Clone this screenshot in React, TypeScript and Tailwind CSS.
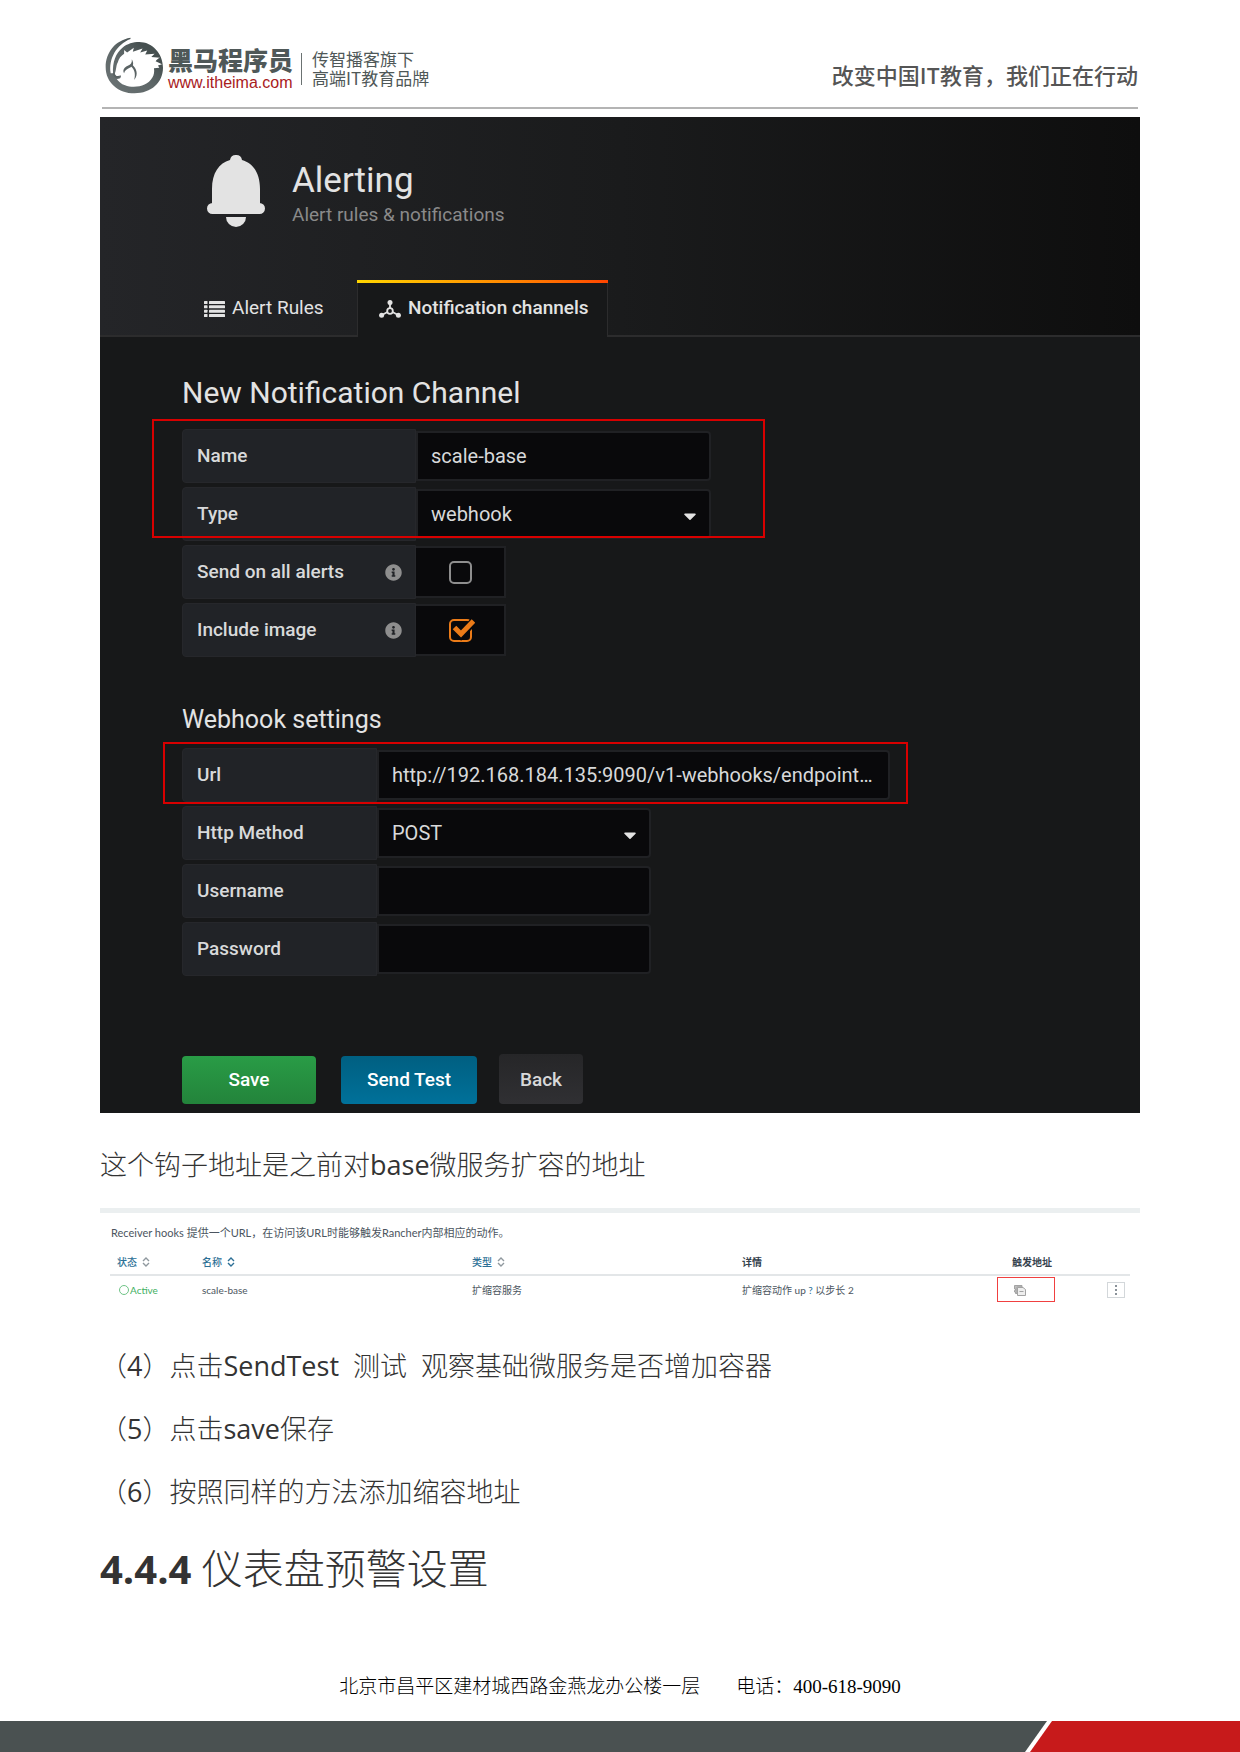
import React from "react";
import { FaInfoCircle, FaCaretDown } from "react-icons/fa";

const cjk = "font-['Open_Sans','Noto_Sans_CJK_SC',sans-serif]";

function HorseLogo() {
  return (
    <svg viewBox="20 16 176 170" className="h-[57px] w-[59px] shrink-0" aria-hidden="true">
      <defs>
        <linearGradient id="ring" x1="0" y1="1" x2="1" y2="0">
          <stop offset="0" stopColor="#6d7576" />
          <stop offset="0.5" stopColor="#5d6667" />
          <stop offset="0.75" stopColor="#465050" />
          <stop offset="1" stopColor="#465050" />
        </linearGradient>
      </defs>
      <path
        fill="url(#ring)"
        d="M96 18C50 26 22 62 22 106C22 152 60 184 108 184C158 184 193 152 193 108C193 64 160 31 122 31C104 31 86 36 72 48C52 64 42 92 44 124L37 124C30 82 54 38 96 22Z"
      />
      <path
        fill="#fff"
        d="M48 127C54 118 52 102 58 92C61 80 68 72 77 66L77 55L86 62L106 48L103 60L132 50L125 62L146 56L140 68L168 66L158 76L184 78C176 81 174 85 171 88L190 97L178 101L182 108L166 109C170 130 158 148 138 158C122 166 96 167 80 160C68 156 60 148 55 141C66 142 70 134 66 130C58 134 50 134 48 127Z"
      />
      <path d="M100 82C108 97 103 103 95 107C85 111 78 117 77 124C71 114 79 106 88 102C97 98 101 93 100 82Z" fill="#5a6364" />
      <path d="M101 98C112 108 122 126 107 144C112 126 108 113 98 104Z" fill="#5a6364" />
      <path d="M46 124C48 134 54 138 62 134" fill="none" stroke="#5a6364" strokeWidth="6" />
    </svg>
  );
}

function BellIcon() {
  return (
    <svg viewBox="0 0 58 72" className="h-[72px] w-[58px] shrink-0 text-[#e3e3e3]" fill="currentColor" aria-hidden="true">
      <path d="M29 0a6 6 0 0 0-6 5C12 8 5 18 5 34v14H5.500a5.500 5.500 0 0 0 0 11h47a5.500 5.500 0 0 0 0-11H53V34C53 18 46 8 35 5a6 6 0 0 0-6-5Z" />
      <path d="M19 62h20a10 10 0 0 1-20 0Z" />
    </svg>
  );
}

function ListIcon() {
  return (
    <svg viewBox="0 0 21 16" className="h-[16px] w-[21px]" fill="currentColor" aria-hidden="true">
      {[0, 4.333, 8.667, 13].map((y) => (
        <g key={y}>
          <rect x="0" y={y} width="3.500" height="3" rx="0.600" />
          <rect x="5" y={y} width="16" height="3" rx="0.600" />
        </g>
      ))}
    </svg>
  );
}

function ChannelIcon() {
  return (
    <svg viewBox="0 0 22 18" className="h-[18px] w-[22px]" aria-hidden="true">
      <g stroke="currentColor" strokeWidth="1.800" fill="none">
        <path d="M11 3v6M8.500 12L3 15M13.500 12L19 15" />
        <circle cx="11" cy="11" r="2.800" />
      </g>
      <g fill="currentColor">
        <circle cx="11" cy="2.600" r="2.500" />
        <circle cx="2.600" cy="15.200" r="2.500" />
        <circle cx="19.400" cy="15.200" r="2.500" />
      </g>
    </svg>
  );
}

const labelBox =
  "flex h-[54px] shrink-0 items-center justify-between rounded-l-sm border border-[#26272b] bg-[#212327] pl-[14px] pr-[13px] text-[19px] font-medium text-[#d8d9da]";
const control =
  "block h-[50px] w-full appearance-none rounded-r-sm border-2 border-[#202124] bg-[#09090b] px-[13px] text-[20px] text-[#d8d9da] outline-none";

function SelectBox({ id, value, options }: { id: string; value: string; options: string[] }) {
  return (
    <div className="relative">
      <select id={id} defaultValue={value} className={control}>
        {options.map((o) => (
          <option key={o}>{o}</option>
        ))}
      </select>
      <FaCaretDown className="pointer-events-none absolute right-[11px] top-[17px] size-[20px] text-[#e3e3e3]" />
    </div>
  );
}

function Field({ id, label, labelWidth, fieldWidth, children }: { id: string; label: string; labelWidth: string; fieldWidth: string; children: React.ReactNode }) {
  return (
    <div className="flex items-center">
      <label htmlFor={id} className={`${labelBox} ${labelWidth}`}>
        {label}
      </label>
      <div className={fieldWidth}>{children}</div>
    </div>
  );
}

function CheckField({ id, label, checked }: { id: string; label: string; checked?: boolean }) {
  return (
    <div className="flex items-center">
      <label htmlFor={id} className={`${labelBox} w-[234px]`}>
        {label}
        <FaInfoCircle className="size-[17px] text-[#8e8e8e]" />
      </label>
      <div className="relative flex h-[52px] w-[90px] items-center justify-center border-2 border-l-0 border-[#202124] bg-[#09090b]">
        <input
          id={id}
          type="checkbox"
          defaultChecked={checked}
          className="peer size-[23px] appearance-none rounded-[5px] border-2 border-[#8e8e8e] checked:border-[#eb7b18]"
        />
        <svg viewBox="0 0 24 24" className="pointer-events-none absolute left-[35px] top-[11px] hidden size-[24px] peer-checked:block" aria-hidden="true">
          <path d="M3 11L10 18L23 4" fill="none" stroke="#09090b" strokeWidth="8" />
          <path d="M3.500 10.500L10 17L22.500 4" fill="none" stroke="#eb7b18" strokeWidth="5" />
        </svg>
      </div>
    </div>
  );
}

function SortIcon({ active }: { active?: boolean }) {
  return (
    <svg viewBox="0 0 8 10" className={active ? "h-[10px] w-[8px] text-[#2c6f95]" : "h-[10px] w-[8px] text-[#8f989e]"} fill="none" stroke="currentColor" strokeWidth="1.400" aria-hidden="true">
      <path d="M1 4L4 1L7 4M1 6L4 9L7 6" />
    </svg>
  );
}

function AlertingPanel() {
  return (
    <section className="bg-[#171819] pb-[9px] font-['Roboto',sans-serif]">
      <header className="bg-linear-to-r from-[#242528] via-[#1a1b1c] to-[#0e0e0e] to-100%">
        <div className="flex gap-[27px] pl-[107px] pt-[38px]">
          <BellIcon />
          <div className="pt-[4px]">
            <h1 className="text-[35px] leading-[43px] text-[#e3e3e3]">Alerting</h1>
            <p className="text-[19px] leading-[25px] text-[#8a8a8a]">Alert rules &amp; notifications</p>
          </div>
        </div>
        <nav className="mt-[53px] flex items-end text-[19px] text-[#e3e3e3]">
          <a href="#rules" className="flex h-[57px] w-[257px] items-center gap-[7px] border-b-2 border-[#2c2c2d] pl-[104px] pt-[2px]">
            <ListIcon />
            Alert Rules
          </a>
          <a href="#channels" className="bg-linear-to-r from-[#ffd500] to-[#ff4400] pt-[3px]">
            <span className="flex h-[54px] w-[251px] items-center gap-[7px] border-x border-[#2c2c2d] bg-[#171819] pb-[3px] pl-[21px] font-medium">
              <ChannelIcon />
              Notification channels
            </span>
          </a>
          <div className="h-[57px] flex-1 border-b-2 border-[#2c2c2d]" />
        </nav>
      </header>

      <form className="pl-[82px]" onSubmit={(e) => e.preventDefault()}>
        <h2 className="mt-[38px] text-[30px] leading-[36px] text-[#e3e3e3]">New Notification Channel</h2>
        <div className="relative mt-[18px] flex flex-col gap-[4px]">
          <Field id="name" label="Name" labelWidth="w-[234px]" fieldWidth="w-[295px]">
            <input id="name" type="text" defaultValue="scale-base" className={control} />
          </Field>
          <Field id="type" label="Type" labelWidth="w-[234px]" fieldWidth="w-[295px]">
            <SelectBox id="type" value="webhook" options={["webhook", "email", "slack"]} />
          </Field>
          <CheckField id="all" label="Send on all alerts" />
          <CheckField id="image" label="Include image" checked />
          <div className="pointer-events-none absolute -left-[30px] -top-[10px] h-[119px] w-[613px] border-2 border-[#d80000]" />
        </div>

        <h3 className="mt-[47px] text-[25px] leading-[32px] text-[#e3e3e3]">Webhook settings</h3>
        <div className="relative mt-[12px] flex flex-col gap-[4px]">
          <Field id="url" label="Url" labelWidth="w-[195px]" fieldWidth="w-[513px]">
            <input id="url" type="text" defaultValue="http://192.168.184.135:9090/v1-webhooks/endpoint…" className={control} />
          </Field>
          <Field id="method" label="Http Method" labelWidth="w-[195px]" fieldWidth="w-[274px]">
            <SelectBox id="method" value="POST" options={["POST", "PUT"]} />
          </Field>
          <Field id="user" label="Username" labelWidth="w-[195px]" fieldWidth="w-[274px]">
            <input id="user" type="text" className={control} />
          </Field>
          <Field id="pass" label="Password" labelWidth="w-[195px]" fieldWidth="w-[274px]">
            <input id="pass" type="password" className={control} />
          </Field>
          <div className="pointer-events-none absolute -left-[19px] -top-[6px] h-[62px] w-[745px] border-2 border-[#d80000]" />
        </div>

        <div className="mt-[78px] flex items-end text-[19px] font-medium text-white">
          <button type="submit" className="h-[48px] w-[134px] rounded-sm bg-linear-to-b from-[#299c46] to-[#23843b]">
            Save
          </button>
          <button type="button" className="ml-[25px] h-[48px] w-[136px] rounded-sm bg-linear-to-b from-[#005f81] to-[#00719a]">
            Send Test
          </button>
          <button type="button" className="ml-[22px] h-[50px] w-[84px] rounded-sm bg-linear-to-b from-[#262628] to-[#303033] pt-[2px] text-[#d8d9da]">
            Back
          </button>
        </div>
      </form>
    </section>
  );
}

function HooksTable() {
  return (
    <section className="mt-[23px] border-t-[5px] border-[#ebeff0] px-[10px] pt-[12px] font-['Lato','Noto_Sans_CJK_SC',sans-serif] text-[10px] leading-[16px] text-[#4b5560]">
      <p className="pl-px text-[11px]">Receiver hooks 提供一个URL，在访问该URL时能够触发Rancher内部相应的动作。</p>
      <table className="mt-[8px] w-full table-fixed border-collapse text-left">
        <thead>
          <tr className="h-[26px] border-b-2 border-[#e3e6e8] font-normal text-[#2c6f95]">
            <th className="w-[85px] pl-[7px] font-medium">
              <span className="flex items-center gap-[5px]">
                状态
                <SortIcon />
              </span>
            </th>
            <th className="w-[270px] pl-[7px] font-medium">
              <span className="flex items-center gap-[5px]">
                名称
                <SortIcon active />
              </span>
            </th>
            <th className="w-[270px] pl-[7px] font-medium">
              <span className="flex items-center gap-[5px]">
                类型
                <SortIcon />
              </span>
            </th>
            <th className="w-[270px] pl-[7px] font-bold text-[#35424d]">详情</th>
            <th className="pl-[7px] font-bold text-[#35424d]">触发地址</th>
            <th className="w-[40px]" aria-label="操作" />
          </tr>
        </thead>
        <tbody>
          <tr className="h-[28px]">
            <td className="pl-[9px] text-[#3fb05f]">
              <span className="flex items-center gap-px">
                <span className="size-[10px] rounded-full border border-[#6fc487]" />
                Active
              </span>
            </td>
            <td className="pl-[7px]">scale-base</td>
            <td className="pl-[7px]">扩缩容服务</td>
            <td className="pl-[7px]">
              扩缩容动作 up <span className="text-[#2c6f95]">?</span> 以步长 2
            </td>
            <td>
              <button type="button" aria-label="复制" className="-ml-[8px] flex h-[25px] w-[58px] items-center border border-[#f04040] pl-[16px]">
                <svg viewBox="0 0 12 12" className="size-[12px] text-[#a3a3a3]" fill="none" stroke="currentColor" aria-hidden="true">
                  <path d="M0.500 1.500H8V3H3V9.500H1.500V8H0.500V6.500H1.500V5H0.500Z" fill="#bdbdbd" />
                  <path d="M3.500 3.500H9L11.500 5.500V11.500H3.500ZM5.500 7.500H9.500" fill="#eee" />
                </svg>
              </button>
            </td>
            <td>
              <button type="button" aria-label="更多" className="ml-[17px] flex h-[16px] w-[18px] flex-col items-center justify-center gap-[2px] border border-[#d3d7da]">
                <span className="size-[2px] bg-[#8a9299]" />
                <span className="size-[2px] bg-[#8a9299]" />
                <span className="size-[2px] bg-[#8a9299]" />
              </button>
            </td>
          </tr>
        </tbody>
      </table>
    </section>
  );
}

export default function App() {
  return (
    <div className={`flex min-h-screen flex-col bg-white text-[#333] ${cjk}`}>
      <header className="mx-[102px] flex h-[109px] justify-between border-b-2 border-[#b4b4b4]">
        <div className="flex pl-[3px] pt-[37px] text-[#4f5858]">
          <HorseLogo />
          <div className="ml-[4px] pt-[10px]">
            <div className="text-[25px] font-black leading-[27px]">黑马程序员</div>
            <div className="font-['Liberation_Sans',sans-serif] text-[16px] leading-[18px] text-[#a8201c]">www.itheima.com</div>
          </div>
          <div className="ml-[8px] mt-[16px] h-[32px] w-px bg-[#6b7272]" />
          <div className="ml-[10px] pt-[12px] font-['Noto_Sans_CJK_SC',sans-serif] text-[17px] leading-[19px]">
            <div>传智播客旗下</div>
            <div>高端IT教育品牌</div>
          </div>
        </div>
        <div className="pt-[59px] font-['Noto_Sans_CJK_SC',sans-serif] text-[22px] font-medium leading-[30px] text-[#555]">改变中国IT教育，我们正在行动</div>
      </header>

      <main className="mx-[100px] mt-[8px]">
        <AlertingPanel />
        <p className="mt-[32px] text-[27px] leading-[40px]">
          <span className="font-light">这个钩子地址是之前对</span>base<span className="font-light">微服务扩容的地址</span>
        </p>
        <HooksTable />
        <ol className="mt-[43px] space-y-[23px] text-[27px] leading-[40px]">
          <li>
            <span className="font-light">（</span>4<span className="font-light">）点击</span>SendTest&nbsp; <span className="font-light">测试</span>&nbsp; <span className="font-light">观察基础微服务是否增加容器</span>
          </li>
          <li>
            <span className="font-light">（</span>5<span className="font-light">）点击</span>save<span className="font-light">保存</span>
          </li>
          <li>
            <span className="font-light">（</span>6<span className="font-light">）按照同样的方法添加缩容地址</span>
          </li>
        </ol>
        <h2 className="mt-[26px] text-[40px] font-bold leading-[60px]">
          4.4.4 <span className="text-[41px] font-light">仪表盘预警设置</span>
        </h2>
      </main>

      <footer className="mt-auto">
        <p className="flex justify-center gap-[36px] pb-[19px] font-['Liberation_Serif','Noto_Sans_CJK_SC',serif] text-[19px] font-light leading-[30px] text-black">
          <span>北京市昌平区建材城西路金燕龙办公楼一层</span>
          <span>电话：400-618-9090</span>
        </p>
        <div className="flex h-[31px]">
          <div className="flex-1 bg-[#4a5151] [clip-path:polygon(0_0,100%_0,calc(100%-22px)_100%,0_100%)]" />
          <div className="-ml-[17px] w-[210px] bg-[#c71a1b] [clip-path:polygon(22px_0,100%_0,100%_100%,0_100%)]" />
        </div>
      </footer>
    </div>
  );
}
